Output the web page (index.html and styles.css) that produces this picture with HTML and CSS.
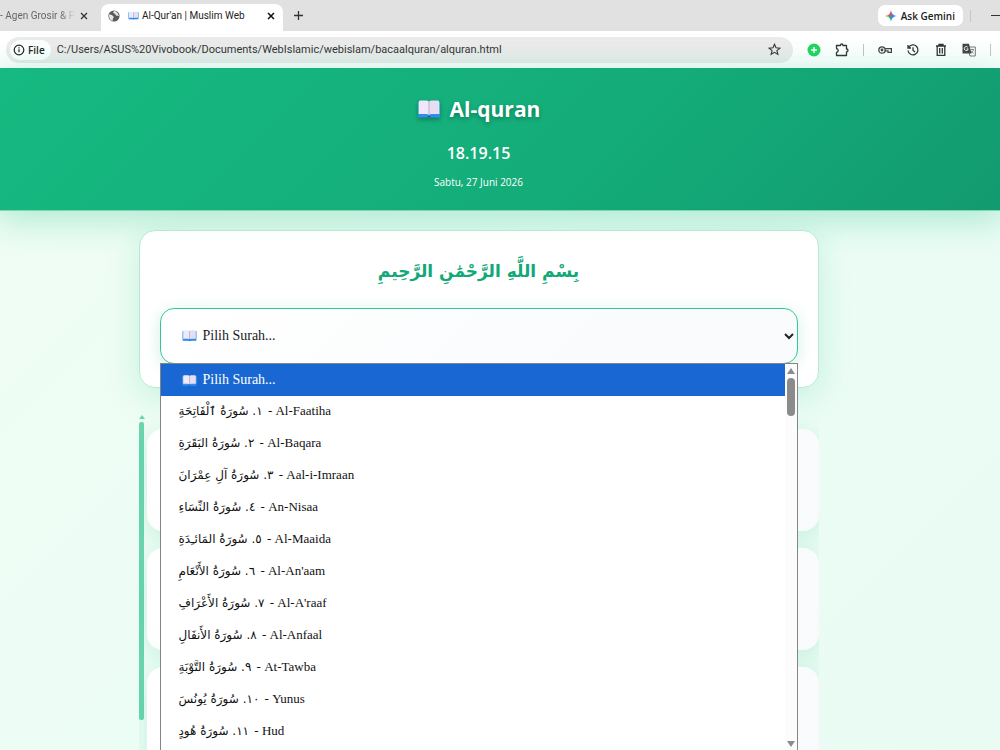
FILE: index.html
```html
<!DOCTYPE html>
<html lang="id">
<head>
  <meta charset="UTF-8">
  <meta name="viewport" content="width=device-width, initial-scale=1.0">
  <title>Al-Qur'an | Muslim Web</title>
  <link rel="stylesheet" href="styles.css">
</head>
<body>

<!-- Shared book icon -->
<svg class="defs" width="0" height="0" aria-hidden="true">
  <symbol id="book" viewBox="0 0 24 20">
    <path d="M1 3h22v15.500H1z" fill="#2f8fe8"/>
    <path d="M1 3h1.500v12H1zM21.500 3H23v12h-1.500z" fill="#6db4f3"/>
    <path d="M2 2.500Q2 1.500 3.500 1.500h6Q12 1.500 12 3v13q-1-1-3-1H2z" fill="#efe8f8"/>
    <path d="M22 2.500q0-1-1.500-1h-6Q12 1.500 12 3v13q1-1 3-1h7z" fill="#e6def3"/>
    <path d="M12 3v13" stroke="#b9acd4" stroke-width="1"/>
    <path d="M10.500 17.500h3" stroke="#1c5fae" stroke-width="1.500"/>
  </symbol>
</svg>

<!-- Browser tabs -->
<div class="tab-bar">
  <div class="tab tab-old">
    <span class="tab-title">- Agen Grosir &amp; P</span>
    <button class="icon-btn" aria-label="Close tab"><svg width="8" height="8" viewBox="0 0 8 8"><path d="M1 1l6 6M7 1L1 7" stroke="#333" stroke-width="1.300"/></svg></button>
  </div>
  <div class="tab tab-active">
    <svg width="12" height="12" viewBox="0 0 12 12"><circle cx="6" cy="6" r="5.600" fill="#55585c"/><path d="M1 4.500Q3.500 4.300 4.500 5.500t1.500 1.500l-1 1.500-.5 2.500Q1.300 9.500 1 6zM6 1l-1 2 2 .8 1 1.700 3 .5Q10.700 3 7.500 1.300z" fill="#e4e5e6"/></svg>
    <svg class="tab-book" width="11" height="9"><use href="#book"/></svg>
    <span>Al-Qur'an | Muslim Web</span>
    <button class="icon-btn close-active" aria-label="Close tab"><svg width="8" height="8" viewBox="0 0 8 8"><path d="M1 1l6 6M7 1L1 7" stroke="#111" stroke-width="1.500"/></svg></button>
  </div>
  <button class="icon-btn new-tab" aria-label="New tab"><svg width="9" height="9" viewBox="0 0 9 9"><path d="M4.500 0v9M0 4.500h9" stroke="#333" stroke-width="1.300"/></svg></button>
  <button class="gemini">
    <svg width="12" height="12" viewBox="0 0 12 12">
      <path d="M6 0Q6.500 5.500 12 6H6z" fill="#4d7ef2"/><path d="M6 0Q5.500 5.500 0 6h6z" fill="#ee4d45"/>
      <path d="M0 6q5.500.5 6 6V6z" fill="#35ad62"/><path d="M12 6q-5.500.5-6 6V6z" fill="#3186ff"/>
      <path d="M0 6l3-.7 1 1.700z" fill="#f6bd2c"/>
    </svg>
    Ask Gemini
  </button>
  <span class="divider"></span>
  <button class="icon-btn minimize" aria-label="Minimize"><svg width="9" height="9" viewBox="0 0 9 9"><path d="M0 4.500h9" stroke="#333"/></svg></button>
</div>

<!-- Address bar -->
<div class="toolbar">
  <div class="address">
    <span class="file-chip">
      <svg width="12" height="12" viewBox="0 0 12 12" fill="none" stroke="#222"><circle cx="6" cy="6" r="4.800" stroke-width="1.200"/><path d="M6 5.300v3M6 3.300v1.100" stroke-width="1.200"/></svg>
      File
    </span>
    <input type="text" class="url" aria-label="Address" value="C:/Users/ASUS%20Vivobook/Documents/WebIslamic/webislam/bacaalquran/alquran.html">
    <button class="icon-btn" aria-label="Bookmark"><svg width="13" height="13" viewBox="0 0 13 13"><path d="M6.500 1.300l1.500 3.500 3.900.3-3 2.500 1 3.800-3.400-2-3.400 2 1-3.800-3-2.500 3.900-.3z" fill="none" stroke="#333" stroke-width="1.100"/></svg></button>
  </div>
  <div class="tools">
    <button class="icon-btn" aria-label="Add"><svg width="14" height="14" viewBox="0 0 14 14"><circle cx="7" cy="7" r="6.500" fill="#22d45f"/><path d="M7 4v6M4 7h6" stroke="#fff" stroke-width="1.400"/></svg></button>
    <button class="icon-btn" aria-label="Extensions"><svg width="14" height="14" viewBox="0 0 14 14"><path d="M1.500 2.500h4q0-1.500 1.200-1.500t1.200 1.500h3.600v3.500q1.500.1 1.500 1.400t-1.500 1.400v3.700h-10V9.400q1.700-.3 1.700-1.900T1.500 5.600z" fill="none" stroke="#333" stroke-width="1.300" stroke-linejoin="round"/></svg></button>
    <span class="divider"></span>
    <button class="icon-btn" aria-label="Passwords"><svg width="14" height="14" viewBox="0 0 14 14" fill="none" stroke="#444" stroke-width="1.300"><circle cx="4" cy="7" r="3.200"/><circle cx="4" cy="7" r=".8" fill="#444"/><path d="M7 5.600h6.400v3.800H10V7.800H7"/></svg></button>
    <button class="icon-btn" aria-label="History"><svg width="14" height="14" viewBox="0 0 14 14" fill="none" stroke="#333" stroke-width="1.300"><path d="M2.600 4.400A5 5 0 1 1 2 7.500M2 2v3h3M7 4.200v3l2 1.700"/></svg></button>
    <button class="icon-btn" aria-label="Delete"><svg width="14" height="14" viewBox="0 0 14 14" fill="none" stroke="#333" stroke-width="1.300"><path d="M2 3h10M5 2.500v-1h4v1M3.200 3v9.300h7.600V3M5.700 5v5.500M8.300 5v5.500"/></svg></button>
    <button class="icon-btn" aria-label="Translate"><svg width="14" height="14" viewBox="0 0 14 14"><path d="M5 4h8.300v9H8z" fill="#fff" stroke="#777"/><path d="M.5.700h6.500l2.500 9.800h-9z" fill="#444"/><path d="M5.800 4.300a2 2 0 1 0 .4 1.600H4.500" fill="none" stroke="#fff" stroke-width=".9"/><path d="M8.500 6.500H12M10.200 5.700v.8M11.500 6.500Q11 9 9 10M9.200 7.700q1 2 2.500 2.800" fill="none" stroke="#777" stroke-width=".8"/></svg></button>
    <span class="divider"></span>
  </div>
</div>

<div class="page">
  <header class="header">
    <h1><svg class="title-book" width="24" height="20"><use href="#book"/></svg>Al-quran</h1>
    <div class="clock">18.19.15</div>
    <div class="date">Sabtu, 27 Juni 2026</div>
  </header>

  <main class="container">
    <section class="surah-card">
      <p class="bismillah" lang="ar" dir="rtl">بِسْمِ اللَّهِ الرَّحْمَٰنِ الرَّحِيمِ</p>
      <div class="select-wrap">
        <select class="surah-select" aria-label="Surah">
          <option>Pilih Surah...</option>
          <option>١. سُورَةُ ٱلْفَاتِحَةِ - Al-Faatiha</option>
          <option>٢. سُورَةُ البَقَرَةِ - Al-Baqara</option>
        </select>
        <svg class="select-book" width="15" height="13" aria-hidden="true"><use href="#book"/></svg>

        <!-- Open surah list -->
        <div class="dropdown">
          <ul class="options" role="listbox" aria-label="Surah">
            <li class="selected" role="option" aria-selected="true"><svg width="15" height="13"><use href="#book"/></svg>Pilih Surah...</li>
            <li role="option"><span lang="ar">١. سُورَةُ ٱلْفَاتِحَةِ</span> - Al-Faatiha</li>
            <li role="option"><span lang="ar">٢. سُورَةُ البَقَرَةِ</span> - Al-Baqara</li>
            <li role="option"><span lang="ar">٣. سُورَةُ آلِ عِمْرَانَ</span> - Aal-i-Imraan</li>
            <li role="option"><span lang="ar">٤. سُورَةُ النِّسَاءِ</span> - An-Nisaa</li>
            <li role="option"><span lang="ar">٥. سُورَةُ المَائـِدَةِ</span> - Al-Maaida</li>
            <li role="option"><span lang="ar">٦. سُورَةُ الأَنْعَامِ</span> - Al-An'aam</li>
            <li role="option"><span lang="ar">٧. سُورَةُ الأَعْرَافِ</span> - Al-A'raaf</li>
            <li role="option"><span lang="ar">٨. سُورَةُ الأَنفَالِ</span> - Al-Anfaal</li>
            <li role="option"><span lang="ar">٩. سُورَةُ التَّوْبَةِ</span> - At-Tawba</li>
            <li role="option"><span lang="ar">١٠. سُورَةُ يُونُسَ</span> - Yunus</li>
            <li role="option"><span lang="ar">١١. سُورَةُ هُودٍ</span> - Hud</li>
          </ul>
          <div class="scrollbar" aria-hidden="true">
            <span class="arrow-up"></span>
            <span class="thumb"></span>
            <span class="arrow-down"></span>
          </div>
        </div>
      </div>
    </section>

    <section class="ayat-list">
      <div class="ayat-scroll" aria-hidden="true">
        <span class="ayat-arrow"></span>
        <span class="ayat-thumb"></span>
      </div>
      <div class="ayat-cards">
        <div class="ayat-card"></div>
        <div class="ayat-card"></div>
        <div class="ayat-card"></div>
      </div>
    </section>
  </main>
</div>

</body>
</html>
```
FILE: styles.css
```css
/* General Styles */
* {
  box-sizing: border-box;
}

body {
  margin: 0;
  height: 100vh;
  overflow: hidden;
  display: flex;
  flex-direction: column;
  font-family: "Open Sans", sans-serif;
}

svg {
  flex: none;
}

.defs {
  position: absolute;
}

button {
  font-family: inherit;
  border: none;
  background: none;
  padding: 0;
  cursor: pointer;
}

.icon-btn {
  display: flex;
}

.divider {
  width: 1px;
  height: 12px;
  background: #c4c4c4;
}

/* Browser tabs */
.tab-bar {
  height: 31px;
  flex: none;
  display: flex;
  align-items: center;
  background: #e1e1e1;
  font-size: 10px;
  color: #222;
}

.tab {
  display: flex;
  align-items: center;
  font-family: Roboto, sans-serif;
}

.tab-old {
  width: 101px;
  justify-content: space-between;
  padding-right: 13px;
  color: #666;
  white-space: nowrap;
}

.tab-title {
  -webkit-mask-image: linear-gradient(to right, #000 80%, transparent);
  mask-image: linear-gradient(to right, #000 80%, transparent);
}

.tab-active {
  align-self: flex-end;
  width: 182px;
  height: 27px;
  padding: 0 8px 4px 7px;
  background: #fff;
  border-radius: 8px 8px 0 0;
  white-space: nowrap;
}

.tab-book {
  margin: 0 3px 0 8px;
}

.close-active {
  margin-left: auto;
}

.new-tab {
  margin-left: 11px;
}

.gemini {
  display: flex;
  align-items: center;
  gap: 4px;
  height: 21px;
  padding: 0 8px 0 7px;
  margin: 0 7px 0 auto;
  border-radius: 7px;
  background: #fff;
  font-size: 10px;
  font-weight: 600;
  color: #222;
}

.minimize {
  margin-left: 20px;
}

/* Address bar */
.toolbar {
  height: 37px;
  flex: none;
  display: flex;
  align-items: center;
  gap: 14px;
  padding: 0 9px 0 6px;
  background: #fff;
}

.address {
  flex: 1;
  display: flex;
  align-items: center;
  gap: 6px;
  height: 26px;
  padding: 0 12px 0 4px;
  border-radius: 13px;
  background: #edebec;
}

.file-chip {
  display: flex;
  align-items: center;
  gap: 3px;
  height: 20px;
  padding: 0 6px 0 3px;
  border-radius: 10px;
  background: #fff;
  font-size: 10px;
  font-weight: 600;
  color: #222;
}

.url {
  flex: 1;
  border: none;
  padding: 0;
  background: none;
  font-family: Roboto, sans-serif;
  font-size: 11px;
  color: #333;
}

.tools {
  display: flex;
  align-items: center;
  gap: 14px;
}

/* Page */
.page {
  flex: 1;
  min-height: 0;
  background: linear-gradient(135deg, #f0fdf4 0%, #ecfdf5 50%, #e9fbf3 100%);
}

.header {
  height: 143px;
  padding: 19px 43px 0 0;
  text-align: center;
  color: #fff;
  background: linear-gradient(135deg, #16b981 0%, #14ac79 60%, #129a6f 100%);
  border-bottom: 1px solid #7fd6b6;
  box-shadow: 0 6px 32px 4px rgba(16, 185, 129, 0.28);
}

.header h1 {
  display: flex;
  align-items: center;
  justify-content: center;
  gap: 9px;
  margin: 0;
  font-size: 21px;
  line-height: 44px;
  text-shadow: 0 2px 4px rgba(0, 0, 0, 0.3);
}

.title-book {
  filter: drop-shadow(0 2px 2px rgba(0, 0, 0, 0.3));
}

.clock {
  font-size: 16px;
  font-weight: 600;
  line-height: 44px;
}

.date {
  font-size: 10px;
  line-height: 14px;
}

.container {
  padding: 19px 43px 0 0;
}

.surah-card {
  position: relative;
  z-index: 1;
  max-width: 680px;
  margin: 0 auto;
  padding: 20px 20px 23px;
  background: linear-gradient(#fcfffe, #fff 20px);
  border: 1px solid #b5ead5;
  border-radius: 16px;
  box-shadow: 0 8px 32px rgba(16, 185, 129, 0.18);
}

.bismillah {
  margin: 0 0 17px;
  text-align: center;
  font-family: "DejaVu Sans", sans-serif;
  font-size: 17px;
  font-weight: bold;
  line-height: 40px;
  color: #12a877;
}

/* Surah select */
.select-wrap {
  position: relative;
}

.surah-select {
  display: block;
  width: 100%;
  height: 56px;
  padding: 0 0 2px 38px;
  border: 1px solid #34c795;
  border-radius: 14px;
  background: linear-gradient(135deg, #fff, #f8fafc);
  box-shadow: 0 3px 16px rgba(16, 185, 129, 0.2);
  font-family: "Liberation Serif", serif;
  font-size: 14px;
  color: #222;
}

.select-book {
  position: absolute;
  left: 22px;
  top: 21px;
  pointer-events: none;
}

.dropdown {
  position: absolute;
  top: 55px;
  left: 0;
  right: 0;
  display: flex;
  background: #fff;
  border: 1px solid #858585;
  border-bottom: none;
}

.options {
  flex: 1;
  margin: 0;
  padding: 0 0 2px;
  list-style: none;
  font-family: "Liberation Serif", serif;
  font-size: 13px;
  line-height: 30px;
  color: #111;
}

.options li {
  height: 32px;
  padding-left: 18px;
  white-space: nowrap;
}

.options [lang="ar"] {
  padding-right: 2px;
  font-family: "DejaVu Sans", sans-serif;
  font-size: 12px;
}

.options .selected {
  display: flex;
  align-items: center;
  gap: 6px;
  padding-left: 21px;
  background: #1967d2;
  font-size: 14px;
  color: #fff;
}

.scrollbar {
  width: 12px;
  display: flex;
  flex-direction: column;
  align-items: center;
  padding: 4px 0 3px;
  background: #fcfcfc;
}

.arrow-up,
.arrow-down {
  border: 4px solid transparent;
}

.arrow-up {
  border-top: none;
  border-bottom: 6px solid #8b8b8b;
}

.arrow-down {
  margin-top: auto;
  border-bottom: none;
  border-top: 6px solid #8b8b8b;
}

.thumb {
  width: 8px;
  height: 38px;
  margin-top: 4px;
  border-radius: 4px;
  background: #8b8b8b;
}

/* Ayat list */
.ayat-list {
  display: flex;
  gap: 2px;
  max-width: 680px;
  height: 360px;
  margin: 27px auto 0;
  overflow: hidden;
}

.ayat-scroll {
  width: 6px;
  display: flex;
  flex-direction: column;
  align-items: center;
  gap: 3px;
}

.ayat-arrow {
  border: 3px solid transparent;
  border-top: none;
  border-bottom: 4px solid #6bd5af;
}

.ayat-thumb {
  width: 5px;
  height: 298px;
  border-radius: 2px;
  background: #6bd5af;
}

.ayat-cards {
  flex: 1;
  display: flex;
  flex-direction: column;
  gap: 17px;
  padding-top: 14px;
}

.ayat-card {
  flex: none;
  height: 102px;
  border-radius: 16px;
  background: linear-gradient(135deg, #fff, #f8fafc);
  box-shadow: 0 6px 24px rgba(16, 185, 129, 0.18);
}
```
